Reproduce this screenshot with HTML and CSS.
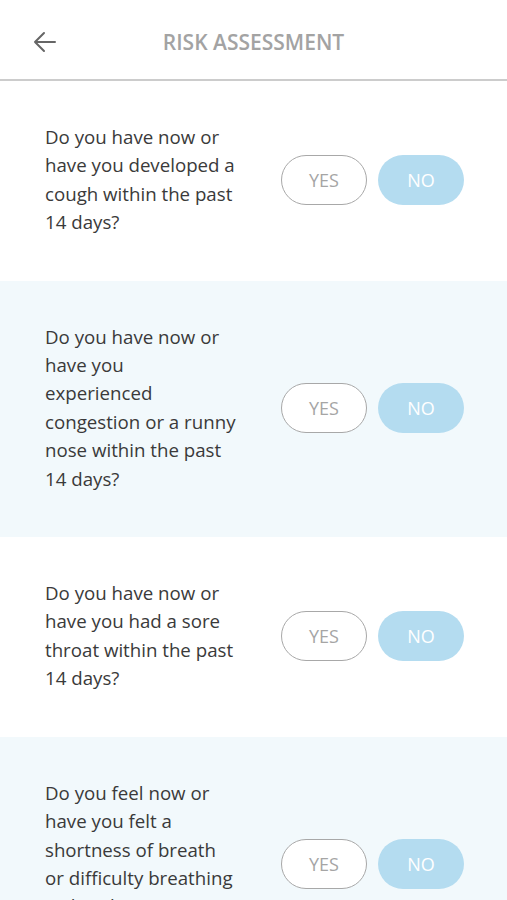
FILE: index.html
```html
<!DOCTYPE html>
<html lang="en">
<head>
    <meta charset="UTF-8">
    <meta name="viewport" content="width=device-width, initial-scale=1.0">
    <title>Risk Assessment</title>
    <link rel="stylesheet" href="styles.css">
</head>
<body>
    <div class="header">
        <button class="back" aria-label="Back">
            <svg width="24" height="24" viewBox="0 0 24 24" fill="none" stroke="#666" stroke-width="2" stroke-linecap="round" stroke-linejoin="round">
                <path d="M22 12H2M11 3l-9 9 9 9"/>
            </svg>
        </button>
        <div class="title">RISK ASSESSMENT</div>
    </div>

    <div class="question">
        <p class="text">Do you have now or<br>have you developed a<br>cough within the past<br>14 days?</p>
        <div class="answers">
            <button class="btn yes">YES</button>
            <button class="btn no">NO</button>
        </div>
    </div>

    <div class="question alt">
        <p class="text">Do you have now or<br>have you<br>experienced<br>congestion or a runny<br>nose within the past<br>14 days?</p>
        <div class="answers">
            <button class="btn yes">YES</button>
            <button class="btn no">NO</button>
        </div>
    </div>

    <div class="question">
        <p class="text">Do you have now or<br>have you had a sore<br>throat within the past<br>14 days?</p>
        <div class="answers">
            <button class="btn yes">YES</button>
            <button class="btn no">NO</button>
        </div>
    </div>

    <div class="question alt">
        <p class="text">Do you feel now or<br>have you felt a<br>shortness of breath<br>or difficulty breathing<br>within the past<br>14 days?</p>
        <div class="answers">
            <button class="btn yes">YES</button>
            <button class="btn no">NO</button>
        </div>
    </div>
</body>
</html>
```

FILE: styles.css
```css
body {
    margin: 0;
    padding: 0;
    background: #ffffff;
    font-family: "Open Sans", "Noto Sans", sans-serif;
    color: #3a3a3a;
}

.header {
    height: 79px;
    border-bottom: 2px solid #cccccc;
    display: flex;
    align-items: center;
    justify-content: center;
    position: relative;
}

.back {
    position: absolute;
    left: 33px;
    top: 30px;
    background: none;
    border: none;
    padding: 0;
    width: 24px;
    height: 24px;
}

.title {
    font-size: 21px;
    font-weight: 600;
    color: #a3a3a3;
    margin-top: 5px;
}

.question {
    display: flex;
    align-items: center;
    justify-content: space-between;
    padding: 42px 43px 44px 45px;
}

.question.alt {
    background: #f2f9fc;
}

.text {
    margin: 0;
    font-size: 18.7px;
    line-height: 28.4px;
    white-space: nowrap;
}

.answers {
    display: flex;
    gap: 11px;
}

.btn {
    width: 86px;
    height: 50px;
    border-radius: 25px;
    font-family: "Open Sans", "Noto Sans", sans-serif;
    font-size: 18px;
    padding: 0;
}

.btn.yes {
    background: #ffffff;
    border: 1.5px solid #a8a8a8;
    color: #a5a5a5;
}

.btn.no {
    background: #b4dcf0;
    border: none;
    color: #ffffff;
}
```
